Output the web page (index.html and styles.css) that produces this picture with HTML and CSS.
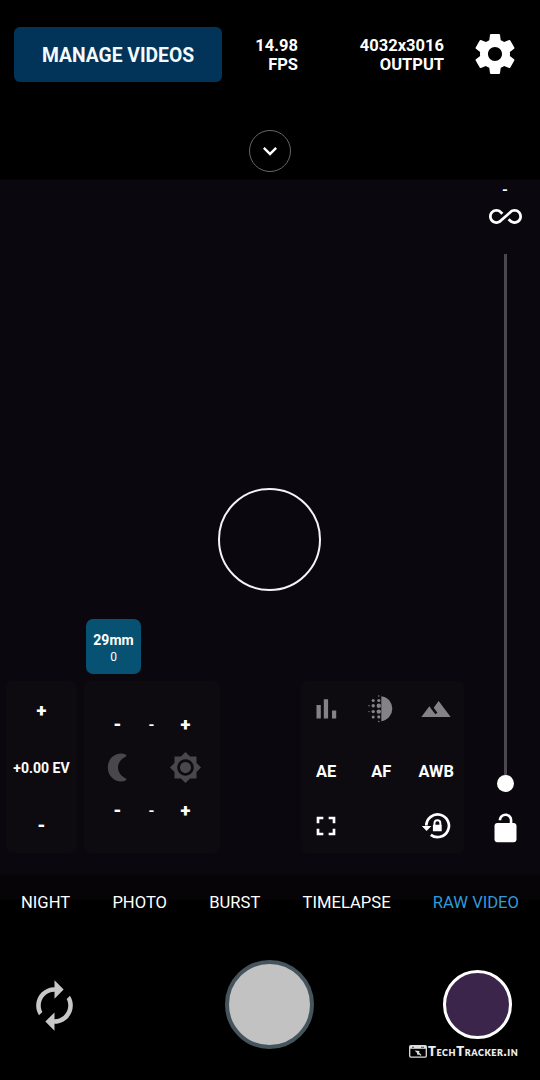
FILE: index.html
```html
<!DOCTYPE html>
<html lang="en">
<head>
<meta charset="utf-8">
<title>Camera</title>
<link rel="stylesheet" href="styles.css">
</head>
<body>
<main class="camera">
  <header class="top">
    <div class="top-row">
      <button class="manage">MANAGE VIDEOS</button>
      <div class="stat stat-fps">14.98<br>FPS</div>
      <div class="stat stat-output">4032x3016<br>OUTPUT</div>
      <svg class="gear" viewBox="0 0 24 24"><path d="M19.43 12.98c.04-.32.07-.64.07-.98s-.03-.66-.07-.98l2.11-1.65c.19-.15.24-.42.12-.64l-2-3.46c-.12-.22-.39-.3-.61-.22l-2.49 1c-.52-.4-1.08-.73-1.69-.98l-.38-2.65C14.46 2.18 14.25 2 14 2h-4c-.25 0-.46.18-.49.42l-.38 2.65c-.61.25-1.17.59-1.69.98l-2.49-1c-.23-.09-.49 0-.61.22l-2 3.46c-.13.22-.07.49.12.64l2.11 1.65c-.04.32-.07.65-.07.98s.03.66.07.98l-2.11 1.65c-.19.15-.24.42-.12.64l2 3.46c.12.22.39.3.61.22l2.49-1c.52.4 1.08.73 1.69.98l.38 2.65c.03.24.24.42.49.42h4c.25 0 .46-.18.49-.42l.38-2.65c.61-.25 1.17-.59 1.69-.98l2.49 1c.23.09.49 0 .61-.22l2-3.46c.12-.22.07-.49-.12-.64l-2.11-1.65zM12 15.500c-1.930 0-3.500-1.570-3.500-3.500s1.570-3.500 3.500-3.500 3.500 1.570 3.500 3.500-1.570 3.500-3.500 3.500z"/></svg>
    </div>
    <div class="expand"><svg viewBox="0 0 24 24"><path d="M16.590 8.590L12 13.170 7.410 8.590 6 10l6 6 6-6z"/></svg></div>
  </header>

  <section class="viewfinder">
    <div class="focus-ring"></div>
    <div class="stage">
      <div class="lens"><b>29mm</b><span>0</span></div>
      <div class="panels">
        <div class="panel ev">
          <span class="sign">+</span>
          <span class="ev-value">+0.00 EV</span>
          <span class="sign">-</span>
        </div>
        <div class="panel tone">
          <span class="sign">-</span><span class="sign thin">-</span><span class="sign">+</span>
          <svg class="dim" viewBox="0 0 33 33"><path d="M25 3.800C17-.200 6.800 6 6.800 16.500S17 33.200 25 29.200q1-1.200-.500-2C14.500 22.500 14.500 10.500 24.500 5.800q1.500-.800.500-2z"/></svg>
          <span></span>
          <svg class="dim" viewBox="0 0 24 24"><path d="M20 8.690V4h-4.690L12 .690 8.690 4H4v4.690L.690 12 4 15.310V20h4.690L12 23.310 15.310 20H20v-4.690L23.310 12 20 8.690zM12 18c-3.310 0-6-2.690-6-6s2.690-6 6-6 6 2.690 6 6-2.690 6-6 6zm0-10c-2.210 0-4 1.790-4 4s1.790 4 4 4 4-1.790 4-4-1.790-4-4-4z"/></svg>
          <span class="sign">-</span><span class="sign thin">-</span><span class="sign">+</span>
        </div>
        <div class="panel tools">
          <svg class="muted" viewBox="0 0 32 32"><path d="M6.500 12h4.300v13.400H6.500zM13.800 6.200h4.300v19.200h-4.300zM22 17.500h4.200v7.900H22z"/></svg>
          <svg class="muted" viewBox="0 0 32 32"><path d="M16.300 3.200a12.600 12.600 0 0 1 0 25z"/><circle cx="13.800" cy="7.500" r="1.600"/><circle cx="13.800" cy="12.800" r="2.200"/><circle cx="13.800" cy="18.600" r="2.200"/><circle cx="13.800" cy="23.900" r="1.600"/><circle cx="8.200" cy="7.500" r="1.500"/><circle cx="8.200" cy="12.800" r="1.700"/><circle cx="8.200" cy="18.600" r="1.700"/><circle cx="8.200" cy="23.900" r="1.500"/><circle cx="4" cy="12.800" r=".7"/><circle cx="4" cy="18.600" r=".7"/><circle cx="13.800" cy="3" r=".8"/><circle cx="13.800" cy="28.500" r=".8"/></svg>
          <svg class="muted" viewBox="0 0 24 24"><path d="M14 6l-3.750 5 2.850 3.800-1.600 1.200C9.810 13.750 7 10 7 10l-6 8h22L14 6z"/></svg>
          <b>AE</b><b>AF</b><b>AWB</b>
          <svg viewBox="0 0 24 24"><path d="M7 14H5v5h5v-2H7v-3zm-2-4h2V7h3V5H5v5zm12 7h-3v2h5v-5h-2v3zM14 5v2h3v3h2V5h-5z"/></svg>
          <span></span>
          <svg viewBox="0 0 32 32"><path class="line" d="M6.300 15.500a11.300 11.300 0 1 1 4.500 9.300"/><path d="M1.800 16h9.600l-4.800 5zM12.900 14.700h.6v-1.500a3.900 3.900 0 0 1 7.800 0v1.500h.4v6.500h-8.800zM15.400 14.700h4v-1.500a2 2 0 0 0-4 0z" fill-rule="evenodd"/></svg>
        </div>
      </div>
    </div>
    <div class="focus">
      <span class="sign thin">-</span>
      <svg viewBox="0 0 24 24"><path d="M18.600 6.620c-1.440 0-2.800.560-3.770 1.530L12 10.660 10.480 12h.010L7.800 14.390c-.640.640-1.490.990-2.400.990-1.870 0-3.390-1.510-3.390-3.380S3.530 8.620 5.400 8.620c.910 0 1.760.350 2.440 1.030l1.130 1 1.510-1.340L9.220 8.200C8.200 7.180 6.840 6.620 5.400 6.620 2.420 6.620 0 9.040 0 12s2.420 5.380 5.400 5.380c1.440 0 2.800-.560 3.770-1.530l2.830-2.500.010.010L13.520 12h-.010l2.690-2.390c.640-.640 1.490-.990 2.400-.990 1.870 0 3.390 1.510 3.390 3.380s-1.520 3.380-3.390 3.380c-.900 0-1.760-.350-2.440-1.030l-1.140-1.010-1.510 1.340 1.270 1.120c1.020 1.010 2.370 1.570 3.820 1.570 2.980 0 5.400-2.410 5.400-5.380s-2.420-5.370-5.400-5.370z"/></svg>
      <div class="track"></div>
      <div class="thumb"></div>
      <svg class="lock" viewBox="0 0 24 24"><path d="M12 17c1.100 0 2-.900 2-2s-.900-2-2-2-2 .900-2 2 .900 2 2 2zm6-9h-1V6c0-2.760-2.240-5-5-5S7 3.240 7 6h1.900c0-1.710 1.390-3.100 3.100-3.100s3.100 1.390 3.100 3.100v2H6c-1.100 0-2 .900-2 2v10c0 1.100.900 2 2 2h12c1.100 0 2-.900 2-2V10c0-1.100-.900-2-2-2z"/></svg>
    </div>
  </section>

  <nav class="modes">
    <span>NIGHT</span><span>PHOTO</span><span>BURST</span><span>TIMELAPSE</span><span class="active">RAW VIDEO</span>
  </nav>

  <footer class="bottom">
    <svg class="flip" viewBox="0 0 24 24"><path d="M12 6v3l4-4-4-4v3c-4.420 0-8 3.580-8 8 0 1.570.460 3.030 1.240 4.260L6.700 14.800c-.450-.830-.700-1.790-.700-2.800 0-3.310 2.690-6 6-6zm6.760 1.740L17.300 9.200c.440.840.700 1.790.700 2.800 0 3.310-2.690 6-6 6v-3l-4 4 4 4v-3c4.420 0 8-3.580 8-8 0-1.570-.460-3.030-1.240-4.260z"/></svg>
    <div class="shutter"></div>
    <div class="preview"></div>
  </footer>
  <div class="brand">
    <svg viewBox="0 0 18 13"><rect x=".7" y=".7" width="16.600" height="11.400" rx="1" class="line"/><path d="M1 1h16v2.800H1z"/><path d="M3 2.300h2M12 2.300h3" class="dark"/><path d="M5.500 5.500l5 .500-.500 1.500 2.500 2.500-1 .700-1.500-1.200-1.300.800-.800-2.500z"/></svg>
    <span>TechTracker.in</span>
  </div>
</main>
</body>
</html>
```
FILE: styles.css
```css
* { box-sizing: border-box; }
body { margin: 0; background: #000; }
svg { display: block; fill: #fff; }
.camera {
  width: 540px; height: 1080px; overflow: hidden;
  display: flex; flex-direction: column;
  color: #fff; font-family: Roboto, sans-serif;
  background: linear-gradient(#000 179px, #0a070e 180px, #0a070e 872px, #070408 877px, #070408 898px, #000 901px);
}
.top { height: 180px; display: flex; flex-direction: column; align-items: center; }
.top-row { width: 540px; height: 130px; padding: 27px 21px 0 14px; display: flex; align-items: flex-start; }
.manage {
  width: 208px; height: 55px; padding: 1px 0 0; border: 0; border-radius: 6px;
  background: #023459; color: #f4fbff; font: 700 19.300px Roboto, sans-serif;
}
.stat { padding-top: 9px; text-align: right; font-size: 16.500px; line-height: 19px; font-weight: 700; white-space: nowrap; }
.stat-fps { width: 76px; }
.stat-output { width: 146px; }
.gear { width: 48px; height: 48px; margin: 3px 0 0 27px; }
.expand { width: 42px; height: 42px; border: 1px solid #666; border-radius: 50%; display: grid; place-items: center; }
.expand svg { width: 28px; height: 28px; }

.viewfinder { position: relative; height: 695px; display: flex; }
.focus-ring {
  position: absolute; left: 218px; top: 308px; width: 103px; height: 103px;
  border: 2px solid #f4f4f6; border-radius: 50%;
}
.stage { width: 470px; padding-top: 439px; }
.lens {
  width: 55px; height: 55px; margin-left: 86px; border-radius: 7px; background: #075173;
  display: flex; flex-direction: column; align-items: center; padding-top: 12px;
}
.lens b { font-size: 14px; line-height: 18px; }
.lens span { font-size: 12px; line-height: 16px; }
.panels { display: flex; margin: 7px 0 0 6px; }
.panel { height: 172px; background: #0e0b10; border-radius: 6px; }
.sign { font-size: 18.500px; line-height: 20px; font-weight: 900; }
.thin { font-size: 15px; font-weight: 700; }
.ev { width: 71px; display: grid; grid-template-rows: 60px 53px 63px; place-items: center; }
.ev-value { font-size: 14px; font-weight: 700; white-space: nowrap; }
.tone {
  width: 136px; margin-left: 7px; padding: 22px 1px 0 0;
  display: grid; grid-template: 43px 43px 43px / repeat(3, 34px);
  justify-content: center; place-items: center;
}
.tone .dim { width: 33px; height: 33px; }
.dim { fill: #49474b; }
.muted { fill: #858287; }
.tools {
  width: 163px; margin-left: 81px; padding-right: 2.600px;
  display: grid; grid-template: 55px 70px 39px / repeat(3, 55px);
  justify-content: center; place-items: center;
}
.tools svg { width: 32px; height: 32px; }
.tools b { font-size: 16.400px; }
.tools .line { fill: none; stroke: #fff; stroke-width: 2.700; }
.focus { width: 70px; display: flex; flex-direction: column; align-items: center; }
.focus svg { width: 33px; height: 33px; }
.track { width: 3px; height: 521px; margin-top: 21px; background: #4a484e; }
.thumb { width: 17px; height: 17px; border-radius: 50%; background: #fff; }
.focus .lock { margin-top: 20px; }

.modes {
  height: 55px; padding: 0 21px; display: flex; align-items: center; justify-content: space-between;
  font-size: 16.600px;
}
.modes .active { color: #2f9bdc; }
.bottom { height: 119px; padding: 30px 28px 0 27px; display: flex; justify-content: space-between; align-items: flex-start; }
.flip { width: 55px; height: 55px; margin-top: 18px; fill: #c8c8c8; }
.shutter { width: 89px; height: 89px; margin-left: 13px; border-radius: 50%; border: 4px solid #46545e; background: #c1c2c1; }
.preview { width: 69px; height: 69px; margin-top: 10px; border-radius: 50%; border: 3px solid #fff; background: #3b254a; }
.brand { height: 14px; margin: -5px 0 0 409px; display: flex; align-items: center; font: 800 13px Lato, sans-serif; font-variant: small-caps; letter-spacing: .580px; color: #eee; }
.brand svg { width: 18px; height: 13px; margin-right: 1px; fill: #ddd; }
.brand .line { fill: none; stroke: #ddd; stroke-width: 1.300; }
.brand .dark { stroke: #222; stroke-width: .800; }
```
